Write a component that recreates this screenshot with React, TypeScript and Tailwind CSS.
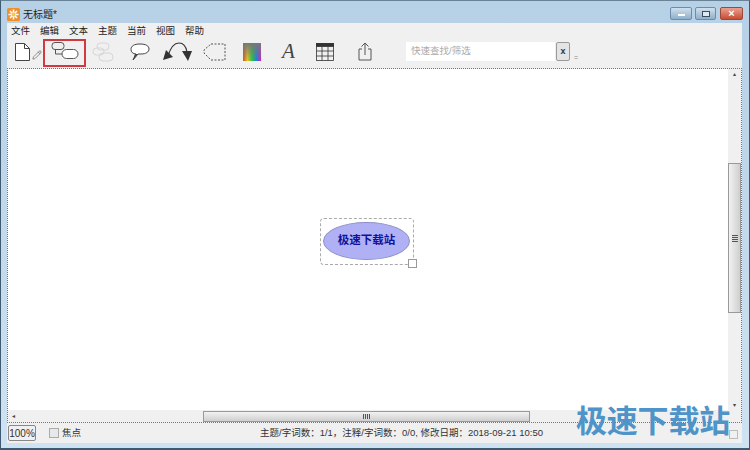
import { Pencil } from "lucide-react";

const cjk = "font-['Liberation_Sans','Noto_Sans_CJK_SC',sans-serif]";

const menus = ["文件", "编辑", "文本", "主题", "当前", "视图", "帮助"];

function TitleBar() {
  return (
    <div className="flex h-[22px] items-start pl-[6px] pr-[6px] pt-[6px]">
      <svg width="13" height="13" viewBox="0 0 13 13" className="mt-[1px]">
        <rect width="13" height="13" rx="1.5" fill="#f0902a" />
        <path d="M6.5 1.5v10M1.5 6.5h10M3 3l7 7M10 3l-7 7" stroke="#fff" strokeWidth="1.6" />
        <circle cx="6.5" cy="6.5" r="2" fill="#f6c84a" />
      </svg>
      <span className="ml-[3px] mt-[1px] text-[10px] leading-[14px] text-[#222]">无标题*</span>
      <div className="ml-auto flex">
        <div className="flex h-[13px] w-[22px] items-center justify-center rounded-[2px] border border-[#6d8caa] bg-gradient-to-b from-[#cfe0ee] to-[#8fb0cb]">
          <div className="mt-[3px] h-[2px] w-[7px] bg-white" />
        </div>
        <div className="ml-[3px] flex h-[13px] w-[21px] items-center justify-center rounded-[2px] border border-[#6d8caa] bg-gradient-to-b from-[#cfe0ee] to-[#8fb0cb]">
          <div className="h-[6px] w-[8px] border-[1.5px] border-[#3c4c5c] bg-[#dfe8ef]" />
        </div>
        <div className="ml-[4px] flex h-[13px] w-[23px] items-center justify-center rounded-[2px] border border-[#9a4a3a] bg-gradient-to-b from-[#e8a090] to-[#c84a32] text-[11px] font-bold leading-none text-white">
          ×
        </div>
      </div>
    </div>
  );
}

function MenuBar() {
  return (
    <div className="flex h-[15px] items-center gap-[10px] pl-[4px] text-[9.5px] text-[#222]">
      {menus.map((m) => (
        <span key={m} className="w-[19px] whitespace-nowrap leading-[15px]">
          {m}
        </span>
      ))}
    </div>
  );
}

function Toolbar() {
  return (
    <div className="flex h-[30px] items-center pb-[3px]">
      <svg width="15" height="18" viewBox="0 0 15 18" fill="none" stroke="#444" className="ml-[8px]">
        <path d="M.5.5h9l5 5v12H.5z" fill="#fff" />
        <path d="M9.500.5v5h5" />
      </svg>
      <Pencil size={10} strokeWidth={1.2} className="ml-[2px] mt-[6px] text-[#333]" />
      {/* selected tool */}
      <div className="ml-[1px] mt-[3px] flex h-[28px] w-[43px] items-center justify-center border-[2px] border-[#d0393f]">
        <svg width="28" height="18" viewBox="0 0 28 18" fill="none" stroke="#555" className="mb-[4px]">
          <rect x="1" y="0.500" width="12" height="7" rx="3" />
          <rect x="11" y="7.500" width="16" height="9" rx="4.500" fill="#fff" />
          <path d="M4.500 7.500v4.500H11" />
        </svg>
      </div>
      <svg width="22" height="20" viewBox="0 0 22 20" fill="none" stroke="#d6d6d6" className="ml-[6px]">
        <rect x="5" y="1" width="12" height="7" rx="3.5" />
        <rect x="1" y="6" width="11" height="7" rx="3.5" />
        <rect x="7" y="11" width="14" height="8" rx="4" />
      </svg>
      <svg width="20" height="18" viewBox="0 0 20 18" fill="none" className="ml-[16px]">
        <path d="M6 11C3 11 1 9 1 6.500 1 3 4 1 10 1s9 2 9 5-3 5-8 5H8l-5 6z" fill="#fff" stroke="#444" />
        <path d="M8 11l-5 6 2-6z" fill="#444" />
      </svg>
      <svg width="32" height="21" viewBox="0 0 32 21" fill="none" className="ml-[12px]">
        <path d="M6 15C9 5 13 2 17 2c4 0 7 3 8 9" stroke="#333" strokeWidth="1.2" />
        <path d="M1 19l3-10 7 7z" fill="#333" />
        <path d="M20 10l10 0-4 10z" fill="#333" />
      </svg>
      <svg width="24" height="18" viewBox="0 0 24 18" fill="none" className="ml-[9px]">
        <path d="M8 1h14v16H8L1 10V7z" stroke="#555" strokeDasharray="2 1.500" />
      </svg>
      <div className="ml-[16px] h-[18px] w-[18px] bg-[linear-gradient(90deg,#d8501e,#e6c81e,#28c83c,#2080e0,#d020c0)]">
        <div className="h-full w-full bg-gradient-to-b from-[#777] to-transparent" />
      </div>
      <span className="ml-[21px] w-[13px] font-['Liberation_Serif',serif] text-[21px] italic leading-none text-[#444]">
        A
      </span>
      <svg width="18" height="18" viewBox="0 0 18 18" fill="none" stroke="#333" strokeWidth="0.8" className="ml-[21px]">
        <rect x="0.500" y="0.500" width="17" height="17" />
        <rect x="0.500" y="0.500" width="17" height="3" fill="#333" />
        <path d="M6 3.500v14M12 3.500v14M0.500 8h17M0.500 13h17" />
      </svg>
      <svg width="14" height="19" viewBox="0 0 14 19" fill="none" stroke="#555" className="ml-[24px]">
        <path d="M4 7H1v11h12V7h-3M7 13V1M3.500 4.500 7 1l3.500 3.500" />
      </svg>
      <div className="ml-[34px] flex h-[19px] w-[149px] items-center bg-white pl-[5px] text-[9.5px] text-[#aaa]">
        快速查找/筛选
      </div>
      <div className="ml-[1px] flex h-[19px] w-[14px] items-center justify-center rounded-[2px] border border-[#999] bg-[#e4e4e4] text-[9px] font-bold leading-none text-[#333]">
        x
      </div>
      <span className="ml-[4px] mt-[12px] text-[7px] leading-none text-[#888]">=</span>
    </div>
  );
}

function Canvas() {
  return (
    <div className="relative min-h-0 min-w-0 flex-1 bg-white">
      <div className="absolute left-[312px] top-[149px] h-[47px] w-[94px] rounded-[4px] border border-dashed border-[#aaa]" />
      <div className="absolute left-[315px] top-[153px] flex h-[38px] w-[87px] items-center justify-center rounded-[50%] border border-[#8f8fc8] bg-[#b0b0f4] text-[11.5px] font-bold text-[#10109a]">
        极速下载站
      </div>
      <div className="absolute left-[400px] top-[190px] h-[9px] w-[9px] border border-[#999] bg-white" />
    </div>
  );
}

function VScroll() {
  return (
    <div className="flex w-[13px] flex-col bg-[#f0f0f0]">
      <div className="h-[94px] shrink-0 pt-[2px] text-center text-[6px] leading-none text-[#444]">▴</div>
      <div className="flex h-[150px] shrink-0 items-center justify-center border border-[#999] bg-gradient-to-r from-[#f2f2f2] to-[#cfcfcf]">
        <div className="h-[7px] w-[6px] bg-[repeating-linear-gradient(0deg,#555_0_1px,#ddd_1px_2px)]" />
      </div>
      <div className="mt-auto pb-[2px] text-center text-[6px] leading-none text-[#444]">▾</div>
    </div>
  );
}

function HScroll() {
  return (
    <div className="flex h-[12px] shrink-0 items-end bg-[#f0f0f0] pl-[4px]">
      <span className="w-[191px] pb-[3px] text-[6px] leading-none text-[#444]">◂</span>
      <div className="flex h-[11px] w-[327px] items-center justify-center border border-[#999] bg-gradient-to-b from-[#f2f2f2] to-[#cfcfcf]">
        <div className="h-[5px] w-[7px] bg-[repeating-linear-gradient(90deg,#555_0_1px,#ddd_1px_2px)]" />
      </div>
    </div>
  );
}

function StatusBar() {
  return (
    <div className="flex h-[20px] shrink-0 items-center pl-[1px] text-[9.5px] text-[#333]">
      <div className="flex h-[16px] w-[28px] items-center justify-center rounded-[2px] border border-[#888] text-[10px]">
        100%
      </div>
      <div className="ml-[13px] h-[10px] w-[10px] border border-[#aaa] bg-[#e8e8e8]" />
      <span className="ml-[3px]">焦点</span>
      <span className="ml-[179px] whitespace-nowrap text-[9.5px]">
        主题/字词数：1/1，注释/字词数：0/0, 修改日期：2018-09-21 10:50
      </span>
      <div className="ml-auto mr-[4px] mt-[2px] h-[9px] w-[9px] border border-[#bbb]" />
    </div>
  );
}

export default function App() {
  return (
    <div className={`${cjk} relative h-[450px] w-[750px] overflow-hidden border-x border-b-2 border-t border-x-[#3d5a70] border-b-[#3d5a70] border-t-[#6a8296] bg-gradient-to-b from-[#b6d0e6] to-[#cfe2f1]`}>
      <TitleBar />
      <div className="ml-[6px] mr-[7px] flex h-[420px] flex-col bg-[#f0f0f0]">
        <MenuBar />
        <Toolbar />
        <div className="flex min-h-0 flex-1 flex-col border border-dotted border-[#777]">
          <div className="flex min-h-0 flex-1">
            <Canvas />
            <VScroll />
          </div>
          <HScroll />
        </div>
        <StatusBar />
      </div>
      <div className="absolute bottom-[14px] right-[19px] font-['Noto_Sans_CJK_SC',sans-serif] text-[31px] font-bold leading-none tracking-[-0.2px] text-[#4f94c8]">
        极速下载站
      </div>
    </div>
  );
}
